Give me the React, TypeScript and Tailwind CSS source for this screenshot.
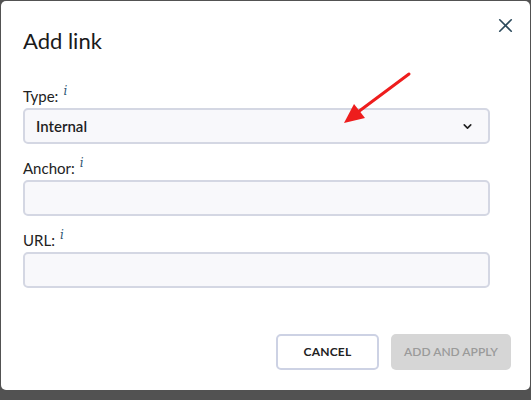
import { X, ChevronDown } from 'lucide-react';

const fields = [
  { label: 'Anchor:', value: '' },
  { label: 'URL:', value: '' },
];

const Info = () => (
  <span className="ml-[5px] -translate-y-[5px] text-[12px] italic text-[#2f5573] font-['DejaVu_Serif',serif] leading-none">
    i
  </span>
);

const Label = ({ text }: { text: string }) => (
  <div className="flex items-center h-[16px] text-[15px] text-[#222] leading-none">
    <span>{text}</span>
    <Info />
  </div>
);

const App = () => {
  return (
    <div className="w-[531px] h-[400px] bg-[#525252] pt-px pl-px font-['Lato',sans-serif] overflow-hidden">
      <div className="relative w-[529px] h-[389px] bg-white rounded-[5px] flex flex-col">
        {/* Header */}
        <div className="flex items-start justify-between pl-[22px] pr-[13px] pt-[28px]">
          <h2 className="text-[22px] text-[#1a1a1a] leading-[24px]">Add link</h2>
          <button className="-mt-[15px] text-[#2c4a5c]">
            <X size={23} strokeWidth={1.7} />
          </button>
        </div>

        {/* Form */}
        <div className="flex flex-col pl-[22px] pr-[40px] mt-[35px]">
          <Label text="Type:" />
          <div className="mt-[4px] h-[36px] flex items-center justify-between rounded-[5px] border-2 border-[#d4d7e3] bg-[#f8f8fb] pl-[11px] pr-[14px]">
            <span className="text-[15px] font-semibold text-[#1f1f1f]">Internal</span>
            <ChevronDown size={13} strokeWidth={3} className="text-[#222]" />
          </div>

          {fields.map((f, i) => (
            <div key={i} className="flex flex-col mt-[16px]">
              <Label text={f.label} />
              <div className="mt-[4px] h-[36px] rounded-[5px] border-2 border-[#d4d7e3] bg-[#f8f8fb]" />
            </div>
          ))}
        </div>

        {/* Footer */}
        <div className="flex justify-end gap-[12px] pr-[19px] mt-auto mb-[20px]">
          <button className="w-[103px] h-[36px] rounded-[5px] border-2 border-[#cdd2e4] bg-white text-[12px] font-bold text-[#222] tracking-[0.2px]">
            CANCEL
          </button>
          <button className="w-[120px] h-[36px] rounded-[5px] bg-[#d6d6d6] text-[12px] font-semibold text-[#9a9a9a]">
            ADD AND APPLY
          </button>
        </div>

        {/* Annotation arrow */}
        <svg
          className="absolute left-[335px] top-[65px] pointer-events-none"
          width="85"
          height="65"
          viewBox="0 0 85 65"
        >
          <line x1="73" y1="8" x2="22" y2="46" stroke="#ee1d1d" strokeWidth="3" strokeLinecap="round" />
          <polygon points="8,57 18,38 29,52" fill="#ee1d1d" />
        </svg>
      </div>
    </div>
  );
};

export default App;
